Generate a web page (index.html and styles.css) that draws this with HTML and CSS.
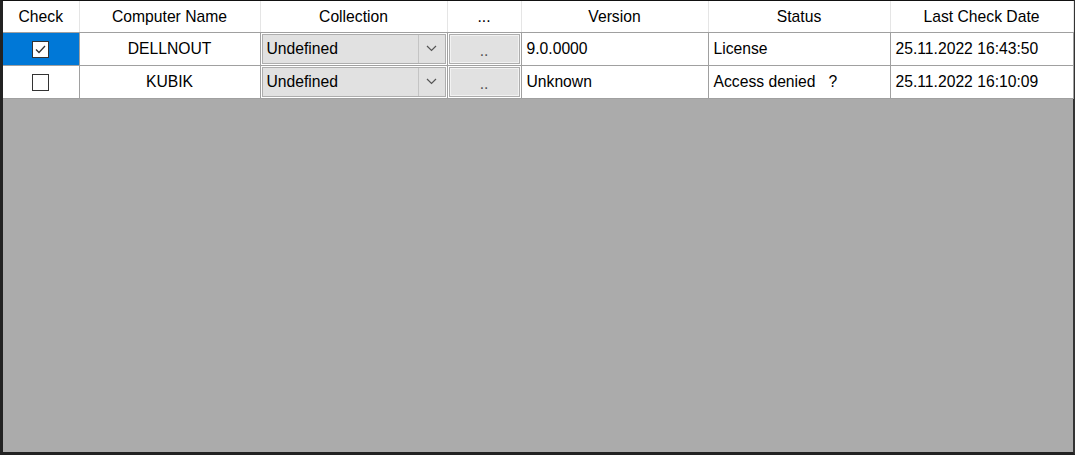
FILE: index.html
```html
<!DOCTYPE html>
<html lang="en">
<head>
<meta charset="UTF-8">
<link rel="stylesheet" href="styles.css">
<title>Computers</title>
</head>
<body>
<div class="grid-frame">
  <table class="grid">
    <colgroup>
      <col class="c-check">
      <col class="c-name">
      <col class="c-coll">
      <col class="c-btn">
      <col class="c-ver">
      <col class="c-status">
      <col class="c-date">
    </colgroup>
    <thead>
      <tr>
        <th>Check</th>
        <th>Computer Name</th>
        <th>Collection</th>
        <th>...</th>
        <th>Version</th>
        <th>Status</th>
        <th>Last Check Date</th>
      </tr>
    </thead>
    <tbody>
      <tr>
        <td class="chk sel"><span class="box on"><svg width="13" height="13" viewBox="0 0 13 13"><path d="M2 6.5 L5 9.5 L11 3" fill="none" stroke="#333" stroke-width="1.3"/></svg></span></td>
        <td class="center">DELLNOUT</td>
        <td class="combo-cell"><div class="combo"><span class="combo-text">Undefined</span><span class="combo-arrow"><svg width="11" height="7" viewBox="0 0 11 7"><path d="M1 1 L5.5 5.5 L10 1" fill="none" stroke="#555" stroke-width="1.2"/></svg></span></div></td>
        <td class="btn-cell"><div class="btn">..</div></td>
        <td>9.0.0000</td>
        <td>License</td>
        <td>25.11.2022 16:43:50</td>
      </tr>
      <tr>
        <td class="chk"><span class="box"></span></td>
        <td class="center">KUBIK</td>
        <td class="combo-cell"><div class="combo"><span class="combo-text">Undefined</span><span class="combo-arrow"><svg width="11" height="7" viewBox="0 0 11 7"><path d="M1 1 L5.5 5.5 L10 1" fill="none" stroke="#555" stroke-width="1.2"/></svg></span></div></td>
        <td class="btn-cell"><div class="btn">..</div></td>
        <td>Unknown</td>
        <td>Access denied &nbsp; ?</td>
        <td>25.11.2022 16:10:09</td>
      </tr>
    </tbody>
  </table>
</div>
</body>
</html>
```

FILE: styles.css
```css
*{margin:0;padding:0;box-sizing:border-box}
body{
  background:#fff;
  font-family:"Liberation Sans",Arial,sans-serif;
  font-size:15.7px;
  color:#000;
}
.grid-frame{
  width:1075px;
  height:455px;
  background:#ababab;
  border-top:1px solid #111;
  border-left:3px solid #222;
  border-right:2px solid #333;
  border-bottom:3px solid #222;
}
.grid{
  border-collapse:collapse;
  table-layout:fixed;
  width:1070px;
}
.c-check{width:76px}
.c-name{width:181px}
.c-coll{width:187px}
.c-btn{width:74px}
.c-ver{width:187px}
.c-status{width:182px}
.c-date{width:183px}

.grid th{
  height:31px;
  font-weight:normal;
  background:#fff;
  border-right:1px solid #e5e5e5;
  border-bottom:1px solid #a0a0a0;
  text-align:center;
  padding-top:2px;
}
.grid td{
  height:32px;
  background:#fff;
  border-right:1px solid #a0a0a0;
  border-bottom:1px solid #a0a0a0;
  padding:0 5px;
  white-space:nowrap;
}
.grid td.center{text-align:center}
.grid td.sel{background:#0078d7}
.grid td.chk{text-align:center;padding:0}
.box{
  display:inline-flex;
  align-items:center;
  justify-content:center;
  width:17px;
  height:17px;
  border:1px solid #333;
  background:#fff;
  vertical-align:middle;
}
.grid td.combo-cell,.grid td.btn-cell{padding:1px 1px 1px 1px}
.combo{
  display:flex;
  height:30px;
  background:#e1e1e1;
  border:1px solid #adadad;
}
.combo-text{
  flex:1;
  display:flex;
  align-items:center;
  padding-left:4px;
}
.combo-arrow{
  width:27px;
  display:flex;
  align-items:center;
  justify-content:center;
  border-left:1px solid #c4c4c4;
}
.btn{
  height:30px;
  display:flex;
  align-items:center;
  justify-content:center;
  background:#e1e1e1;
  border:1px solid #adadad;
  box-shadow:inset 0 0 0 1px #f2f2f2;
  color:#555;
  padding-top:4px;
}
```
